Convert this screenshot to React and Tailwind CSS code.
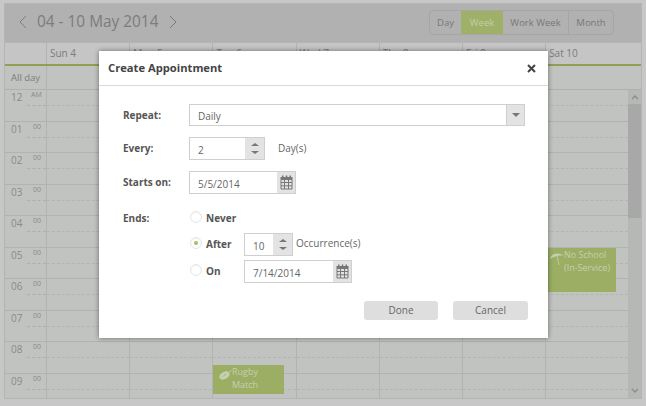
const font = { fontFamily: '"Open Sans", "Liberation Sans", sans-serif' };
const hours = ["12", "01", "02", "03", "04", "05", "06", "07", "08", "09"];
const days = ["Sun 4", "Mon 5", "Tue 6", "Wed 7", "Thu 8", "Fri 9", "Sat 10"];
const cols = "grid grid-cols-[41px_repeat(7,83.2px)]";

function Calendar({ className = "" }) {
  return (
    <svg width="13" height="15" viewBox="0 0 13 15" className={className}>
      <rect x="2" y="0.5" width="1.5" height="2.5" fill="#777" />
      <rect x="5.8" y="0.5" width="1.5" height="2.5" fill="#777" />
      <rect x="9.5" y="0.5" width="1.5" height="2.5" fill="#777" />
      <rect x="0.5" y="2" width="12" height="2.5" fill="#777" />
      <path d="M1 4.5h11v9.5H1z M4.5 4.5v9.5 M8.5 4.5v9.5 M1 7.5h11 M1 10.8h11" fill="none" stroke="#777" strokeWidth="1" />
    </svg>
  );
}

function Spin() {
  return (
    <div className="w-[19px] h-full bg-[#e3e3e3] flex flex-col items-center justify-center gap-[5px]">
      <div className="w-0 h-0 border-x-[4px] border-x-transparent border-b-[3px] border-b-[#777]" />
      <div className="w-0 h-0 border-x-[4px] border-x-transparent border-t-[3px] border-t-[#777]" />
    </div>
  );
}

function Field({ w, value, children }) {
  return (
    <div className={`${w} h-[23px] flex border border-[#cfcfcf] bg-white shrink-0 font-normal`}>
      <div className="flex-1 pl-[8px] text-[10px] leading-[23px] text-[#666] pt-px">{value}</div>
      {children}
    </div>
  );
}

function Radio({ on }) {
  return (
    <div className="w-[12px] h-[12px] -mt-[3px] rounded-full border border-[#e6e6e6] bg-white flex items-center justify-center shadow-[inset_0_1px_1px_#f0f0f0]">
      {on && <div className="w-[4px] h-[4px] rounded-full bg-[#a5c262]" />}
    </div>
  );
}

function Label({ children }) {
  return <div className="w-[66px] shrink-0 text-[10px] font-bold text-[#555]">{children}</div>;
}

function Dialog() {
  return (
    <div className="absolute left-[99px] top-[51px] w-[449px] h-[287px] bg-white shadow-[0_0_5px_rgba(0,0,0,0.45)] text-[#666]">
      <div className="h-[35px] border-b border-[#d9d9d9] flex items-center justify-between pl-[9px] pr-[12px]">
        <div className="text-[11.2px] font-bold text-[#444]">Create Appointment</div>
        <svg width="9" height="9" viewBox="0 0 9 9">
          <path d="M1 1l7 7M8 1l-7 7" stroke="#444" strokeWidth="2" />
        </svg>
      </div>
      <div className="pl-[24px] pr-[23px] pt-[18px]">
        <div className="flex items-center h-[22px]">
          <Label>Repeat:</Label>
          <div className="flex-1 h-[22px] flex border border-[#cfcfcf]">
            <div className="flex-1 pl-[8px] text-[10px] leading-[22px]">Daily</div>
            <div className="w-[18px] bg-[#e3e3e3] border-l border-[#cfcfcf] flex items-center justify-center">
              <div className="w-0 h-0 border-x-[4px] border-x-transparent border-t-[4px] border-t-[#777]" />
            </div>
          </div>
        </div>
        <div className="flex items-center mt-[11px]">
          <Label>Every:</Label>
          <Field w="w-[76px]" value="2"><Spin /></Field>
          <div className="ml-[13px] text-[10px]">Day(s)</div>
        </div>
        <div className="flex items-center mt-[11px]">
          <Label>Starts on:</Label>
          <Field w="w-[107px]" value="5/5/2014">
            <div className="w-[18px] bg-[#e3e3e3] flex items-center justify-center"><Calendar /></div>
          </Field>
        </div>
        <div className="flex mt-[16px]">
          <div className="mt-[1px]"><Label>Ends:</Label></div>
          <div className="flex flex-col">
            <div className="flex items-center h-[16px] pl-[1px] gap-[4px] text-[10px] font-bold text-[#555]">
              <Radio />Never
            </div>
            <div className="flex items-center h-[23px] mt-[7px] pl-[1px] text-[10px] font-bold text-[#555]">
              <Radio on /><span className="ml-[4px] w-[38px]">After</span>
              <Field w="w-[49px]" value="10"><Spin /></Field>
              <span className="ml-[3px] text-[10px] font-normal text-[#666] -mt-[2px]">Occurrence(s)</span>
            </div>
            <div className="flex items-center h-[23px] mt-[4px] pl-[1px] text-[10px] font-bold text-[#555]">
              <Radio /><span className="ml-[4px] w-[38px]">On</span>
              <Field w="w-[108px]" value="7/14/2014">
                <div className="w-[18px] bg-[#e3e3e3] flex items-center justify-center"><Calendar /></div>
              </Field>
            </div>
          </div>
        </div>
        <div className="flex justify-end gap-[15px] mt-[18px] -mr-[3px]">
          <button className="w-[74px] h-[19px] rounded-[3px] bg-[#dedede] text-[10px] text-[#666]">Done</button>
          <button className="w-[75px] h-[19px] rounded-[3px] bg-[#dedede] text-[10px] text-[#666]">Cancel</button>
        </div>
      </div>
    </div>
  );
}

function Event({ pos, lines, icon }) {
  return (
    <div className={`absolute ${pos} bg-[#9bae64] text-[#c6cfb0] text-[9px] leading-[12.5px] pt-[1px] pl-[19px] whitespace-nowrap`}>
      <div className="absolute left-[5px] top-[4px]">{icon}</div>
      {lines.map((l) => <div key={l}>{l}</div>)}
    </div>
  );
}

export default function App() {
  return (
    <div style={font} className="relative w-[646px] h-[406px] bg-[#c7c7c7] pl-[4px] pt-[3px] overflow-hidden">
      <div className="w-[638px] h-[396px] border border-[#b4b4b4] bg-[#c1c3c1] flex flex-col">
        <div className="h-[38px] bg-[#b1b1b1] flex items-center justify-between pl-[13px] pr-[27px] pb-[2px] shrink-0">
          <div className="flex items-center text-[#7c7c7c]">
            <svg width="10" height="14" viewBox="0 0 10 14"><path d="M8 1L2 7l6 6" fill="none" stroke="#7c7c7c" strokeWidth="1" /></svg>
            <div className="text-[15.4px] ml-[9px] mr-[10px]">04 - 10 May 2014</div>
            <svg width="10" height="14" viewBox="0 0 10 14"><path d="M2 1l6 6-6 6" fill="none" stroke="#7c7c7c" strokeWidth="1" /></svg>
          </div>
          <div className="flex h-[25px] border border-[#a6a6a6] rounded-[4px] text-[9.5px] text-[#777] leading-[23px] overflow-hidden">
            <div className="w-[31px] text-center">Day</div>
            <div className="w-[42px] text-center bg-[#9fb068] text-[#c4cdab]">Week</div>
            <div className="w-[66px] text-center border-r border-[#a6a6a6]">Work Week</div>
            <div className="w-[44px] text-center">Month</div>
          </div>
        </div>
        <div className={`${cols} h-[21px] bg-[#c5c5c5] border-t border-[#b4b4b4] border-b-2 border-b-[#8fa052] box-content shrink-0`}>
          <div />
          {days.map((d) => (
            <div key={d} className="border-l border-[#b4b4b4] pl-[3px] text-[10px] leading-[21px] text-[#7c7c7c]">{d}</div>
          ))}
        </div>
        <div className={`${cols} h-[23px] border-b border-[#adb0ad] shrink-0 box-content`}>
          <div className="pl-[6px] text-[9.5px] leading-[24px] text-[#7c7c7c]">All day</div>
          {days.map((d) => <div key={d} className="border-l border-[#b0b3b0]" />)}
        </div>
        <div className="relative flex-1 overflow-hidden flex">
          <div className="flex-1 relative">
            {hours.map((h, i) => (
              <div key={h} className={`${cols} h-[31.5px] border-b border-[#b0b3b0]`}>
                <div className="relative text-[#8a8a8a]">
                  <span className="absolute left-[6px] top-0 text-[10px]">{h}</span>
                  <span className={`absolute ${i === 0 ? "left-[26px]" : "left-[28px]"} top-0 text-[7px]`}>{i === 0 ? "AM" : "00"}</span>
                  <div className="absolute left-[22px] right-0 top-[15px] border-b border-dashed border-[#acafac]" />
                </div>
                {days.map((d) => (
                  <div key={d} className="relative border-l border-[#b0b3b0]">
                    <div className="absolute left-0 right-0 top-[15px] border-b border-dashed border-[#b2b5b2]" />
                  </div>
                ))}
              </div>
            ))}
            <Event
              pos="left-[540px] top-[158px] w-[71px] h-[44px]"
              lines={["No School", "(In-Service)"]}
              icon={
                <svg width="14" height="14" viewBox="0 0 14 14" className="block">
                  <path d="M0 7C1 2 6 0 12 2.5L13 3.5C9 3 4 4.5 0 7z" fill="#c6cfb0" />
                  <path d="M7 4l2 9" stroke="#c6cfb0" strokeWidth="0.8" />
                </svg>
              }
            />
            <Event
              pos="left-[208px] top-[275px] w-[71px] h-[29px]"
              lines={["Rugby", "Match"]}
              icon={
                <svg width="14" height="12" viewBox="0 0 14 12" className="block">
                  <ellipse cx="6.5" cy="6.5" rx="5.5" ry="3.6" transform="rotate(-30 6.5 6.5)" fill="#c6cfb0" />
                  <path d="M4.5 7.5l4-2.5" stroke="#9bae64" strokeWidth="1" strokeDasharray="1 0.7" />
                  <path d="M11 3l2.5-1.5" stroke="#c6cfb0" strokeWidth="0.9" />
                </svg>
              }
            />
          </div>
          <div className="w-[13px] bg-[#b6b8b6] flex flex-col items-center shrink-0">
            <div className="h-[14px] flex items-center justify-center">
              <svg width="8" height="5" viewBox="0 0 8 5"><path d="M1 4l3-3 3 3" fill="none" stroke="#8a8a8a" strokeWidth="1.3" /></svg>
            </div>
            <div className="w-full h-[114px] bg-[#a8a8a8]" />
            <div className="flex-1" />
            <div className="h-[14px] flex items-center justify-center mb-[1px]">
              <svg width="8" height="5" viewBox="0 0 8 5"><path d="M1 1l3 3 3-3" fill="none" stroke="#8a8a8a" strokeWidth="1.3" /></svg>
            </div>
          </div>
        </div>
      </div>
      <Dialog />
    </div>
  );
}
